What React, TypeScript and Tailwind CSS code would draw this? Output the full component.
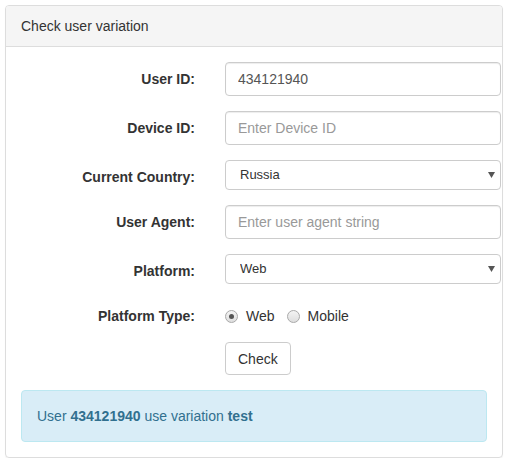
import React from 'react';

const font = { fontFamily: '"Liberation Sans", Arial, Helvetica, sans-serif' };

const Label: React.FC<{ text: string }> = ({ text }) => (
  <label className="w-[174px] shrink-0 text-right font-bold pt-[7px] pb-[1px] leading-[20px] text-[#333]">
    {text}
  </label>
);

const TextInput: React.FC<{ value?: string; placeholder?: string }> = ({ value, placeholder }) => (
  <input
    type="text"
    defaultValue={value}
    placeholder={placeholder}
    className="w-full h-[34px] px-[12px] border border-[#ccc] rounded-[4px] text-[14px] text-[#555] placeholder:text-[#999] shadow-[inset_0_1px_1px_rgba(0,0,0,0.075)] outline-none"
  />
);

const Select: React.FC<{ value: string; options: string[] }> = ({ value, options }) => (
  <div className="relative">
    <select
      defaultValue={value}
      className="w-full h-[30px] pl-[14px] pr-[24px] border border-[#ccc] rounded-[4px] bg-white text-[13px] text-[#333] appearance-none outline-none"
    >
      {options.map((o) => (
        <option key={o}>{o}</option>
      ))}
    </select>
    <svg className="absolute right-[6px] top-[12px] pointer-events-none" width="7" height="6" viewBox="0 0 7 6">
      <path d="M0 0 L7 0 L3.5 6 Z" fill="#555" />
    </svg>
  </div>
);

const Radio: React.FC<{ label: string; checked?: boolean }> = ({ label, checked }) => (
  <span className="flex items-center">
    <span className="w-[13px] h-[13px] rounded-full border border-[#a9a9a9] bg-gradient-to-b from-[#f4f4f4] to-[#dedede] flex items-center justify-center">
      {checked && <span className="w-[5px] h-[5px] rounded-full bg-[#555]" />}
    </span>
    <span className="ml-[8px] text-[#333]">{label}</span>
  </span>
);

export default function App() {
  return (
    <div style={font} className="text-[14px] leading-[20px] text-[#333] bg-white">
      <div className="ml-[5px] mt-[5px] w-[498px] border border-[#ddd] rounded-[4px] shadow-[0_1px_1px_rgba(0,0,0,0.05)]">
        <div className="px-[15px] py-[10px] bg-[#f5f5f5] border-b border-[#ddd] rounded-t-[3px]">
          Check user variation
        </div>
        <div className="p-[15px]">
          <div className="flex mb-[15px]">
            <Label text="User ID:" />
            <div className="ml-[30px] w-[276px] shrink-0">
              <TextInput value="434121940" />
            </div>
          </div>
          <div className="flex mb-[15px]">
            <Label text="Device ID:" />
            <div className="ml-[30px] w-[276px] shrink-0">
              <TextInput placeholder="Enter Device ID" />
            </div>
          </div>
          <div className="flex mb-[15px]">
            <Label text="Current Country:" />
            <div className="ml-[30px] w-[276px] shrink-0">
              <Select value="Russia" options={['Russia', 'Germany', 'USA']} />
            </div>
          </div>
          <div className="flex mb-[15px]">
            <Label text="User Agent:" />
            <div className="ml-[30px] w-[276px] shrink-0">
              <TextInput placeholder="Enter user agent string" />
            </div>
          </div>
          <div className="flex mb-[15px]">
            <Label text="Platform:" />
            <div className="ml-[30px] w-[276px] shrink-0">
              <Select value="Web" options={['Web', 'Mobile']} />
            </div>
          </div>
          <div className="flex mb-[15px]">
            <Label text="Platform Type:" />
            <div className="ml-[30px] flex gap-[12px] pt-[6px]">
              <Radio label="Web" checked />
              <Radio label="Mobile" />
            </div>
          </div>
          <div className="flex mb-[15px]">
            <div className="w-[174px] shrink-0" />
            <button className="ml-[30px] h-[33px] px-[12px] border border-[#ccc] rounded-[4px] bg-white text-[#333]">
              Check
            </button>
          </div>
          <div className="p-[15px] border border-[#bce8f1] bg-[#d9edf7] text-[#31708f] rounded-[4px]">
            User <b>434121940</b> use variation <b>test</b>
          </div>
        </div>
      </div>
    </div>
  );
}
